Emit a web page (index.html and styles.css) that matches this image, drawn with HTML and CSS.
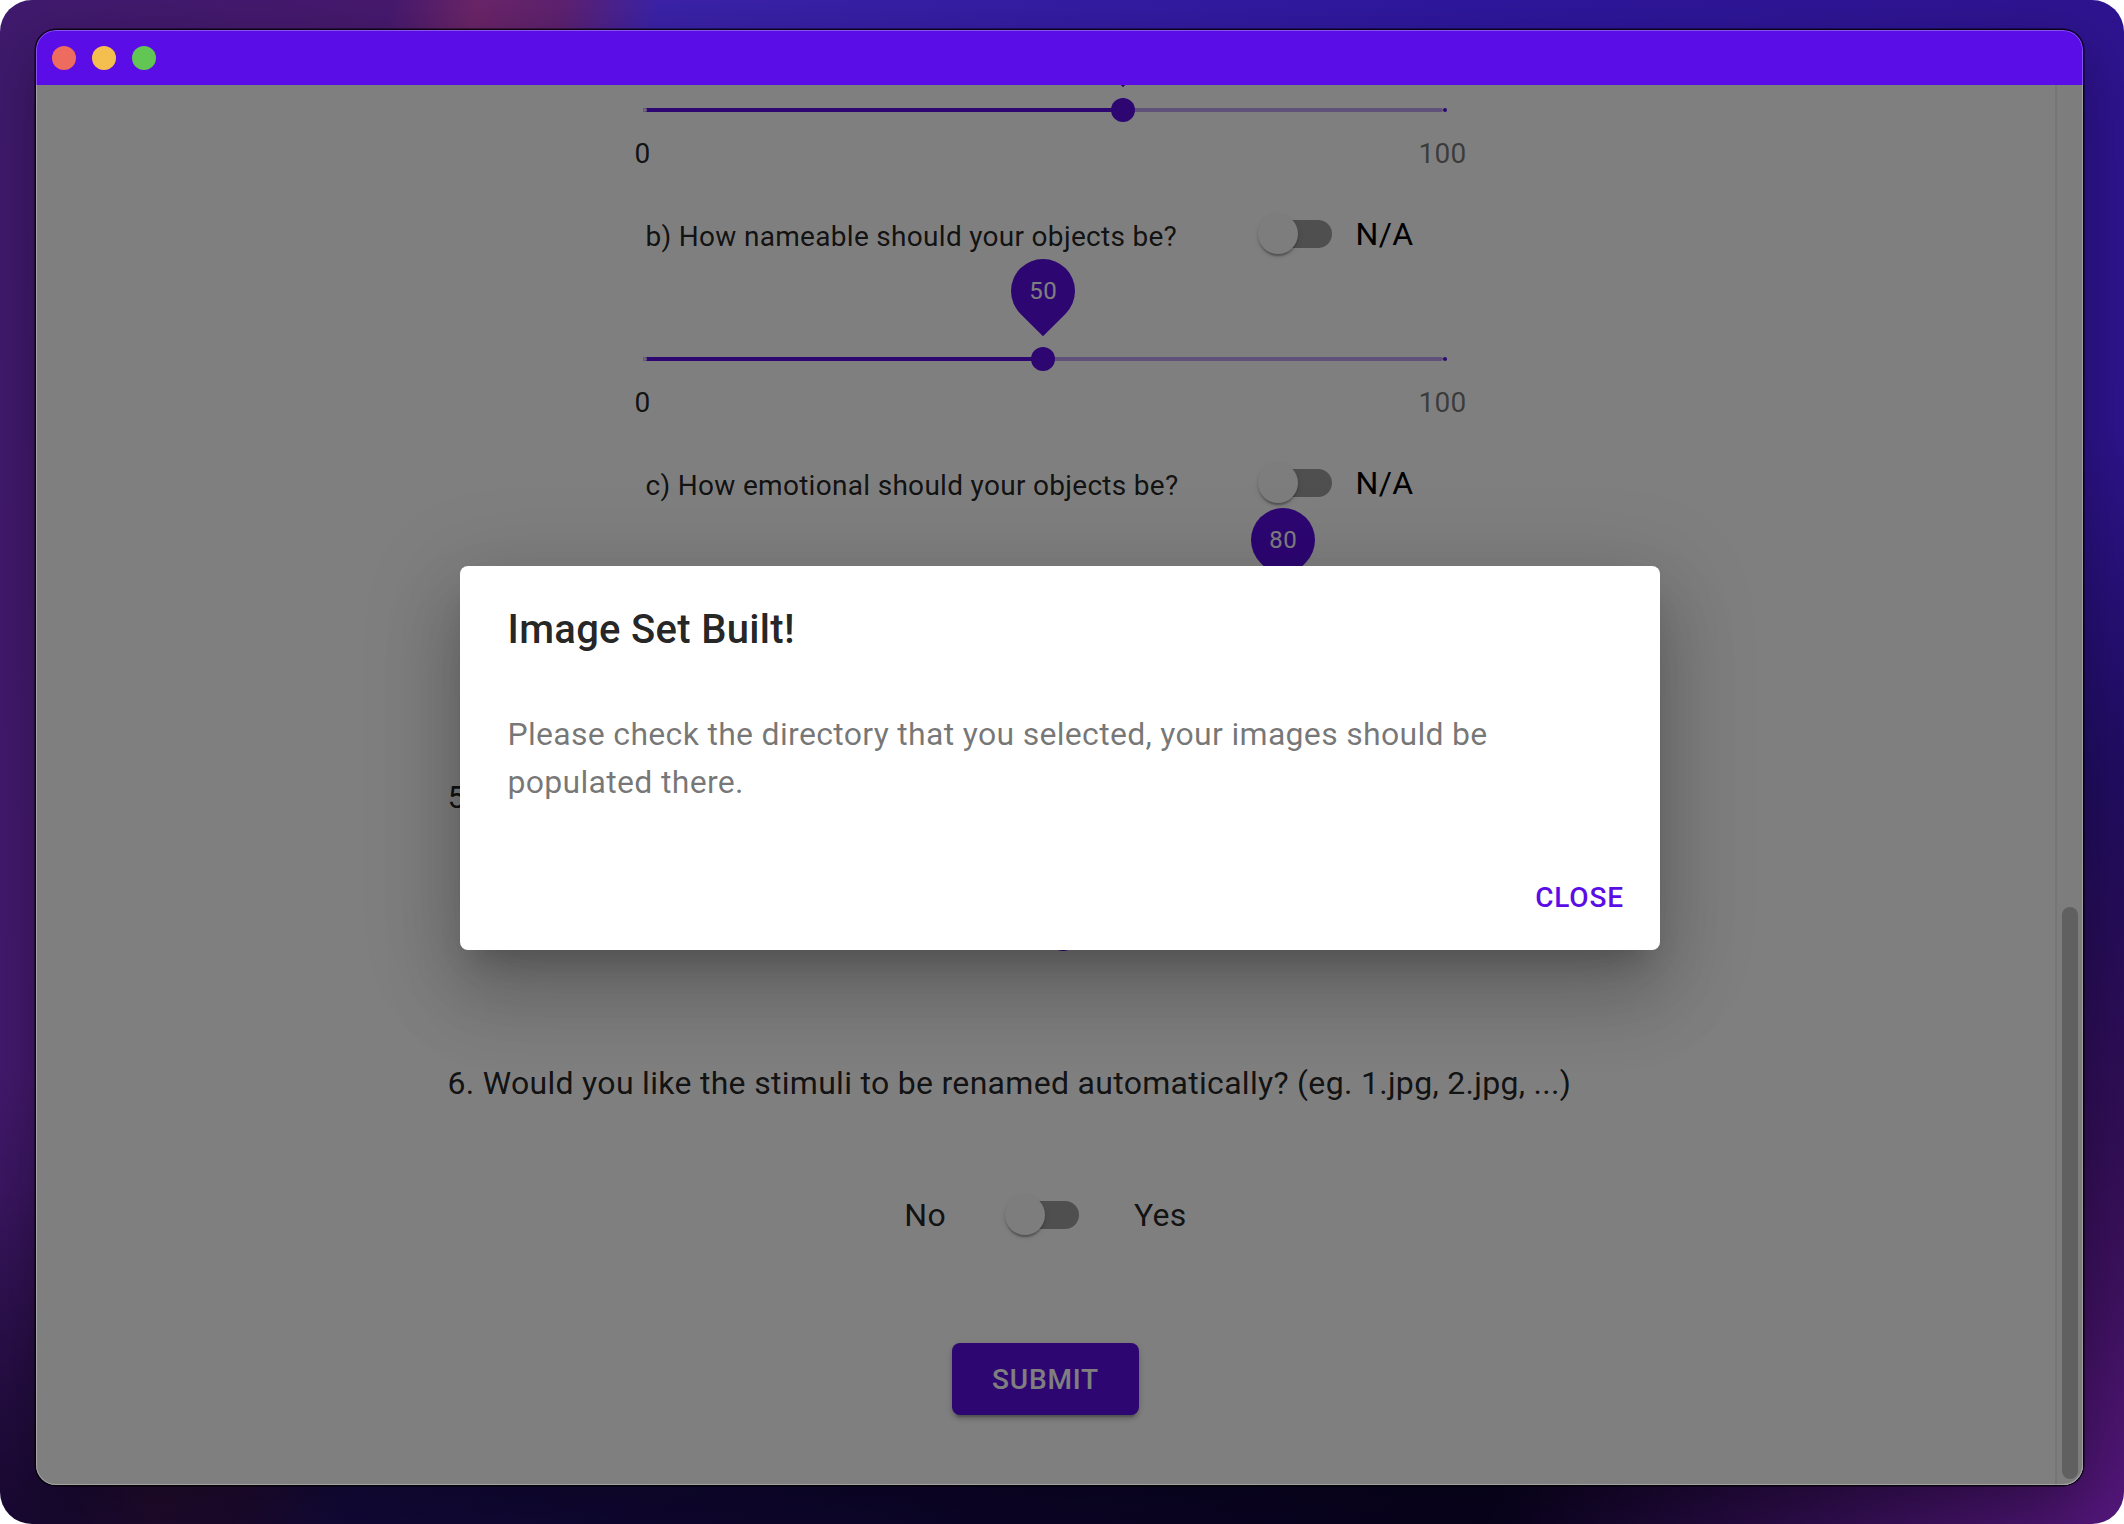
FILE: index.html
```html
<!DOCTYPE html>
<html lang="en">
<head>
<meta charset="utf-8">
<title>Image Set Builder</title>
<link rel="stylesheet" href="styles.css">
</head>
<body>
<div class="window">
  <div class="titlebar">
    <span class="light red"></span>
    <span class="light yellow"></span>
    <span class="light green"></span>
  </div>
  <div class="main">
    <div class="content">
      <div class="form">
        <div class="block">
          <div class="slider">
            <div class="rail"></div>
            <div class="track" style="width:60%"></div>
            <span class="mark active" style="left:0%"></span>
            <span class="mark" style="left:100%"></span>
            <span class="thumb" style="left:60%"><span class="bubble"></span></span>
            <span class="mark-label active" style="left:0%">0</span>
            <span class="mark-label" style="left:100%">100</span>
          </div>
        </div>

        <div class="block subq">
          <div class="row">
            <span class="row-label">b) How nameable should your objects be?</span>
            <span class="switch"><span class="switch-track"></span><span class="switch-thumb"></span></span>
            <span class="na">N/A</span>
          </div>
          <div class="slider">
            <div class="rail"></div>
            <div class="track" style="width:50%"></div>
            <span class="mark active" style="left:0%"></span>
            <span class="mark" style="left:100%"></span>
            <span class="thumb" style="left:50%"><span class="bubble"><span class="bubble-text">50</span></span></span>
            <span class="mark-label active" style="left:0%">0</span>
            <span class="mark-label" style="left:100%">100</span>
          </div>
        </div>

        <div class="block subq">
          <div class="row">
            <span class="row-label">c) How emotional should your objects be?</span>
            <span class="switch"><span class="switch-track"></span><span class="switch-thumb"></span></span>
            <span class="na">N/A</span>
          </div>
          <div class="slider">
            <div class="rail"></div>
            <div class="track" style="width:80%"></div>
            <span class="mark active" style="left:0%"></span>
            <span class="mark" style="left:100%"></span>
            <span class="thumb" style="left:80%"><span class="bubble"><span class="bubble-text">80</span></span></span>
          </div>
        </div>

        <p class="question q5">5</p>
        <div class="block q5-slider">
          <div class="slider">
            <div class="rail"></div>
            <div class="track" style="width:52.5%"></div>
            <span class="thumb" style="left:52.5%"></span>
          </div>
        </div>

        <p class="question q6">6. Would you like the stimuli to be renamed automatically? (eg. 1.jpg, 2.jpg, ...)</p>

        <div class="toggle-row">
          <span class="no">No</span>
          <span class="switch"><span class="switch-track"></span><span class="switch-thumb"></span></span>
          <span class="yes">Yes</span>
        </div>

        <button class="submit" type="button">Submit</button>
      </div>
    </div>
    <div class="scrollbar"><div class="sb-thumb"></div></div>
  </div>

  <div class="overlay">
    <div class="dialog" role="dialog">
      <h2 class="dialog-title">Image Set Built!</h2>
      <div class="dialog-content">
        <p class="dialog-text">Please check the directory that you selected, your images should be populated there.</p>
      </div>
      <div class="dialog-actions">
        <button class="btn-text" type="button">Close</button>
      </div>
    </div>
  </div>
</div>
</body>
</html>
```

FILE: styles.css
```css
* {
  box-sizing: border-box;
}

html {
  background: #ffffff;
}

body {
  margin: 0;
  width: 2124px;
  height: 1524px;
  padding: 30px 41px 39px 36px;
  border-radius: 32px;
  overflow: hidden;
  font-family: Roboto, "Noto Sans", "Liberation Sans", sans-serif;
  background:
    radial-gradient(ellipse 30% 50% at 100% 100%, rgba(88, 24, 128, 0.95) 0%, rgba(88, 24, 128, 0) 100%),
    linear-gradient(160deg, rgba(0, 0, 0, 0) 0%, rgba(0, 0, 0, 0) 52%, rgba(7, 2, 24, 0.92) 90%),
    linear-gradient(to bottom, rgba(0, 0, 0, 0) 0%, rgba(0, 0, 0, 0) 70%, rgba(9, 3, 30, 0.6) 100%),
    linear-gradient(102deg, #3f1a6d 0%, #47196f 16%, #6b2568 19.5%, #5e2170 23%, #3b22a9 27%, #2e179d 60%, #2e1288 100%);
}

.window {
  position: relative;
  height: 100%;
  display: flex;
  flex-direction: column;
  border-radius: 20px;
  overflow: hidden;
  box-shadow: 0 0 0 1.5px rgba(0, 0, 0, 0.8), 0 20px 60px rgba(0, 0, 0, 0.35);
}

.window::after {
  content: "";
  position: absolute;
  inset: 0;
  border-radius: 20px;
  border: 1.5px solid rgba(255, 255, 255, 0.28);
  pointer-events: none;
  z-index: 3;
}

.titlebar {
  position: relative;
  z-index: 2;
  flex: none;
  height: 55px;
  display: flex;
  align-items: center;
  gap: 16px;
  padding-left: 16px;
  background: #5a0de6;
}

.light {
  width: 24px;
  height: 24px;
  border-radius: 50%;
}

.red { background: #ee6b5f; }
.yellow { background: #f5bf4f; }
.green { background: #62c655; }

.main {
  flex: 1;
  min-height: 0;
  display: flex;
  background: #ffffff;
}

.content {
  flex: 1;
  min-width: 0;
  overflow: hidden;
}

.scrollbar {
  flex: none;
  width: 28px;
  border-left: 2px solid #ebebeb;
  background: #fafafa;
  display: flex;
  flex-direction: column;
  justify-content: flex-end;
  padding: 0 5px 6px 5px;
}

.sb-thumb {
  height: 572px;
  border-radius: 8px;
  background: #c1c1c1;
}

.form {
  width: 1196px;
  margin: -3px auto 0;
  display: flex;
  flex-direction: column;
  color: rgba(0, 0, 0, 0.87);
}

.block {
  width: 800px;
  margin-left: 195px;
}

.subq {
  margin-top: 18px;
}

.row {
  display: flex;
  align-items: center;
  height: 76px;
  margin-bottom: 59px;
  padding-left: 3px;
}

.row-label {
  width: 594px;
  flex: none;
  padding-top: 5px;
  font-size: 28px;
  line-height: 40px;
  letter-spacing: 0.3px;
  white-space: nowrap;
}

.na {
  font-size: 32px;
  line-height: 48px;
  letter-spacing: 0.3px;
  color: #000;
}

/* Slider */
.slider {
  position: relative;
  height: 4px;
  padding: 26px 0;
  box-sizing: content-box;
  margin-bottom: 40px;
}

.rail {
  position: absolute;
  left: 0;
  right: 0;
  top: 26px;
  height: 4px;
  border-radius: 2px;
  background: #5b0de5;
  opacity: 0.38;
}

.track {
  position: absolute;
  left: 0;
  top: 26px;
  height: 4px;
  border-radius: 2px;
  background: #5b0de5;
}

.mark {
  position: absolute;
  top: 26px;
  width: 4px;
  height: 4px;
  border-radius: 2px;
  background: #5b0de5;
}

.mark.active {
  background: #ffffff;
  opacity: 0.8;
}

.thumb {
  position: absolute;
  top: 16px;
  width: 24px;
  height: 24px;
  margin-left: -12px;
  border-radius: 50%;
  background: #5b0de5;
}

.bubble {
  position: absolute;
  left: 50%;
  top: -88px;
  width: 64px;
  height: 64px;
  margin-left: -32px;
  border-radius: 50% 50% 50% 0;
  background: #5b0de5;
  transform: rotate(-45deg);
  display: flex;
  align-items: center;
  justify-content: center;
}

.bubble-text {
  transform: rotate(45deg);
  color: #ffffff;
  font-size: 24px;
  line-height: 1.2;
  letter-spacing: 0.4px;
}

.mark-label {
  position: absolute;
  top: 52px;
  transform: translateX(-50%);
  font-size: 28px;
  line-height: 40px;
  letter-spacing: 0.3px;
  color: rgba(0, 0, 0, 0.54);
  white-space: nowrap;
}

.mark-label.active {
  color: rgba(0, 0, 0, 0.87);
}

/* Switch */
.switch {
  position: relative;
  flex: none;
  display: inline-block;
  width: 116px;
  height: 76px;
  padding: 24px;
}

.switch-track {
  display: block;
  width: 100%;
  height: 100%;
  border-radius: 14px;
  background: #000;
  opacity: 0.38;
}

.switch-thumb {
  position: absolute;
  left: 18px;
  top: 18px;
  width: 40px;
  height: 40px;
  border-radius: 50%;
  background: #fafafa;
  box-shadow: 0 4px 2px -2px rgba(0, 0, 0, 0.2), 0 2px 2px 0 rgba(0, 0, 0, 0.14), 0 2px 6px 0 rgba(0, 0, 0, 0.12);
}

/* Questions */
.question {
  margin: 0;
  font-size: 32px;
  line-height: 48px;
  letter-spacing: 0.3px;
  color: rgba(0, 0, 0, 0.87);
  white-space: nowrap;
}

.q5 {
  margin-top: 97px;
}

.q5-slider {
  margin-top: 90px;
}

.q6 {
  margin-top: 52px;
}

.toggle-row {
  display: flex;
  justify-content: center;
  align-items: center;
  margin-top: 70px;
  font-size: 32px;
  line-height: 48px;
  letter-spacing: 0.3px;
  color: rgba(0, 0, 0, 0.87);
}

.no {
  margin-right: 41px;
}

.yes {
  margin-left: 31px;
}

.submit {
  display: block;
  align-self: center;
  margin-top: 90px;
  height: 72px;
  padding: 0 40px;
  border: none;
  border-radius: 8px;
  background: #5b0de5;
  color: #ffffff;
  font-family: Roboto, "Noto Sans", sans-serif;
  font-weight: 500;
  font-size: 28px;
  letter-spacing: 0.8px;
  text-transform: uppercase;
  box-shadow: 0 6px 2px -4px rgba(0, 0, 0, 0.2), 0 4px 4px 0 rgba(0, 0, 0, 0.14), 0 2px 10px 0 rgba(0, 0, 0, 0.12);
}

/* Modal */
.overlay {
  position: absolute;
  inset: 0;
  z-index: 1;
  background: rgba(0, 0, 0, 0.5);
  display: flex;
  align-items: center;
  justify-content: center;
}

.dialog {
  width: 1200px;
  background: #ffffff;
  border-radius: 8px;
  box-shadow: 0 22px 30px -14px rgba(0, 0, 0, 0.2), 0 48px 76px 6px rgba(0, 0, 0, 0.14), 0 18px 92px 16px rgba(0, 0, 0, 0.12);
}

.dialog-title {
  margin: 0;
  padding: 32px 48px;
  font-size: 40px;
  font-weight: 500;
  line-height: 64px;
  letter-spacing: 0.3px;
  color: rgba(0, 0, 0, 0.87);
}

.dialog-content {
  padding: 16px 48px;
}

.dialog-text {
  margin: 0 0 24px;
  font-size: 32px;
  line-height: 48px;
  letter-spacing: 0.3px;
  color: rgba(0, 0, 0, 0.54);
}

.dialog-actions {
  display: flex;
  justify-content: flex-end;
  padding: 16px;
}

.btn-text {
  min-width: 128px;
  height: 72px;
  padding: 12px 16px;
  border: none;
  border-radius: 8px;
  background: transparent;
  color: #5b0de5;
  font-family: Roboto, "Noto Sans", sans-serif;
  font-weight: 500;
  font-size: 28px;
  letter-spacing: 0.8px;
  text-transform: uppercase;
}
```
